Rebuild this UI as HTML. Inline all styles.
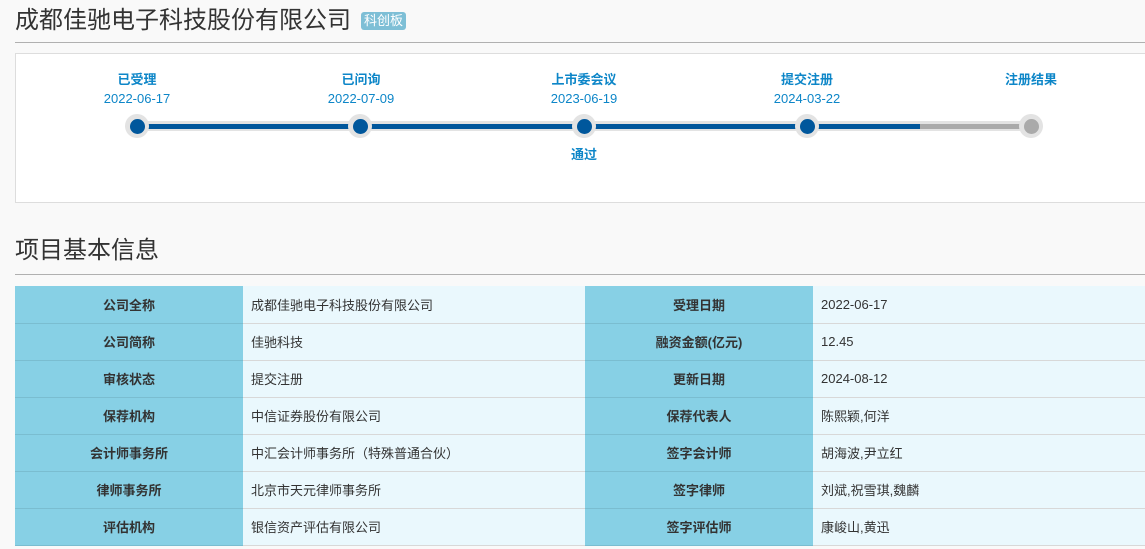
<!DOCTYPE html>
<html><head><meta charset="utf-8"><style>
*{margin:0;padding:0;box-sizing:border-box}
body{width:1145px;height:549px;overflow:hidden;background:#f9f9f9;font-family:"Liberation Sans","Noto Sans CJK SC",sans-serif;position:relative;color:#333}
.a{position:absolute}
h1{position:absolute;left:15px;top:5px;font-size:24px;font-weight:normal;color:#333;line-height:32px;white-space:nowrap}
.tag{display:inline-block;background:#7ebfd6;color:#fff;font-size:13px;line-height:18px;padding:0 3px;border-radius:3px;vertical-align:3px;margin-left:10px}
.hr{position:absolute;left:15px;right:0;height:1px;background:#b0b0b0}
.box{left:15px;top:53px;width:1140px;height:150px;background:#fff;border:1px solid #ddd}
.st{position:absolute;width:160px;text-align:center;color:#0d86c8;font-size:13px}
.st b{display:block;line-height:18px}
.st span{display:block;line-height:20px;font-size:13px}
.halo{position:absolute;width:24px;height:24px;border-radius:50%;background:#e3e3e3}
.dot{position:absolute;width:15px;height:15px;border-radius:50%}
table{position:absolute;left:15px;top:286px;border-collapse:collapse;width:1140px;font-size:13px}
td{height:37px;border-bottom:1px solid #d8d8d8;padding:0 8px}
td.l{background:#87d0e5;text-align:center;font-weight:bold;width:228px;border-bottom-color:#7abdd0}
td.v{background:#eaf8fd;width:342px}
</style></head><body>
<h1>成都佳驰电子科技股份有限公司<span class="tag">科创板</span></h1>
<div class="hr" style="top:42px"></div>
<div class="a box"></div>
<div class="a" style="left:137px;top:121px;width:894px;height:10px;background:#e3e3e3"></div>
<div class="a" style="left:137px;top:124px;width:783px;height:5px;background:#00579c"></div>
<div class="a" style="left:920px;top:124px;width:111px;height:5px;background:#aaa"></div>
<div class="halo" style="left:125px;top:114px"></div><div class="dot" style="left:129.5px;top:118.5px;background:#00579c"></div>
<div class="halo" style="left:348px;top:114px"></div><div class="dot" style="left:352.5px;top:118.5px;background:#00579c"></div>
<div class="halo" style="left:572px;top:114px"></div><div class="dot" style="left:576.5px;top:118.5px;background:#00579c"></div>
<div class="halo" style="left:795px;top:114px"></div><div class="dot" style="left:799.5px;top:118.5px;background:#00579c"></div>
<div class="halo" style="left:1019px;top:114px"></div><div class="dot" style="left:1023.5px;top:118.5px;background:#aaa"></div>
<div class="st" style="left:57px;top:71px"><b>已受理</b><span>2022-06-17</span></div>
<div class="st" style="left:281px;top:71px"><b>已问询</b><span>2022-07-09</span></div>
<div class="st" style="left:504px;top:71px"><b>上市委会议</b><span>2023-06-19</span></div>
<div class="st" style="left:504px;top:146px"><b>通过</b></div>
<div class="st" style="left:727px;top:71px"><b>提交注册</b><span>2024-03-22</span></div>
<div class="st" style="left:951px;top:71px"><b>注册结果</b></div>
<h1 style="top:235px">项目基本信息</h1>
<div class="hr" style="top:274px"></div>
<table>
<tr><td class="l">公司全称</td><td class="v">成都佳驰电子科技股份有限公司</td><td class="l">受理日期</td><td class="v">2022-06-17</td></tr>
<tr><td class="l">公司简称</td><td class="v">佳驰科技</td><td class="l">融资金额(亿元)</td><td class="v">12.45</td></tr>
<tr><td class="l">审核状态</td><td class="v">提交注册</td><td class="l">更新日期</td><td class="v">2024-08-12</td></tr>
<tr><td class="l">保荐机构</td><td class="v">中信证券股份有限公司</td><td class="l">保荐代表人</td><td class="v">陈熙颖,何洋</td></tr>
<tr><td class="l">会计师事务所</td><td class="v">中汇会计师事务所（特殊普通合伙）</td><td class="l">签字会计师</td><td class="v">胡海波,尹立红</td></tr>
<tr><td class="l">律师事务所</td><td class="v">北京市天元律师事务所</td><td class="l">签字律师</td><td class="v">刘斌,祝雪琪,魏麟</td></tr>
<tr><td class="l">评估机构</td><td class="v">银信资产评估有限公司</td><td class="l">签字评估师</td><td class="v">康峻山,黄迅</td></tr>
</table>
</body></html>
